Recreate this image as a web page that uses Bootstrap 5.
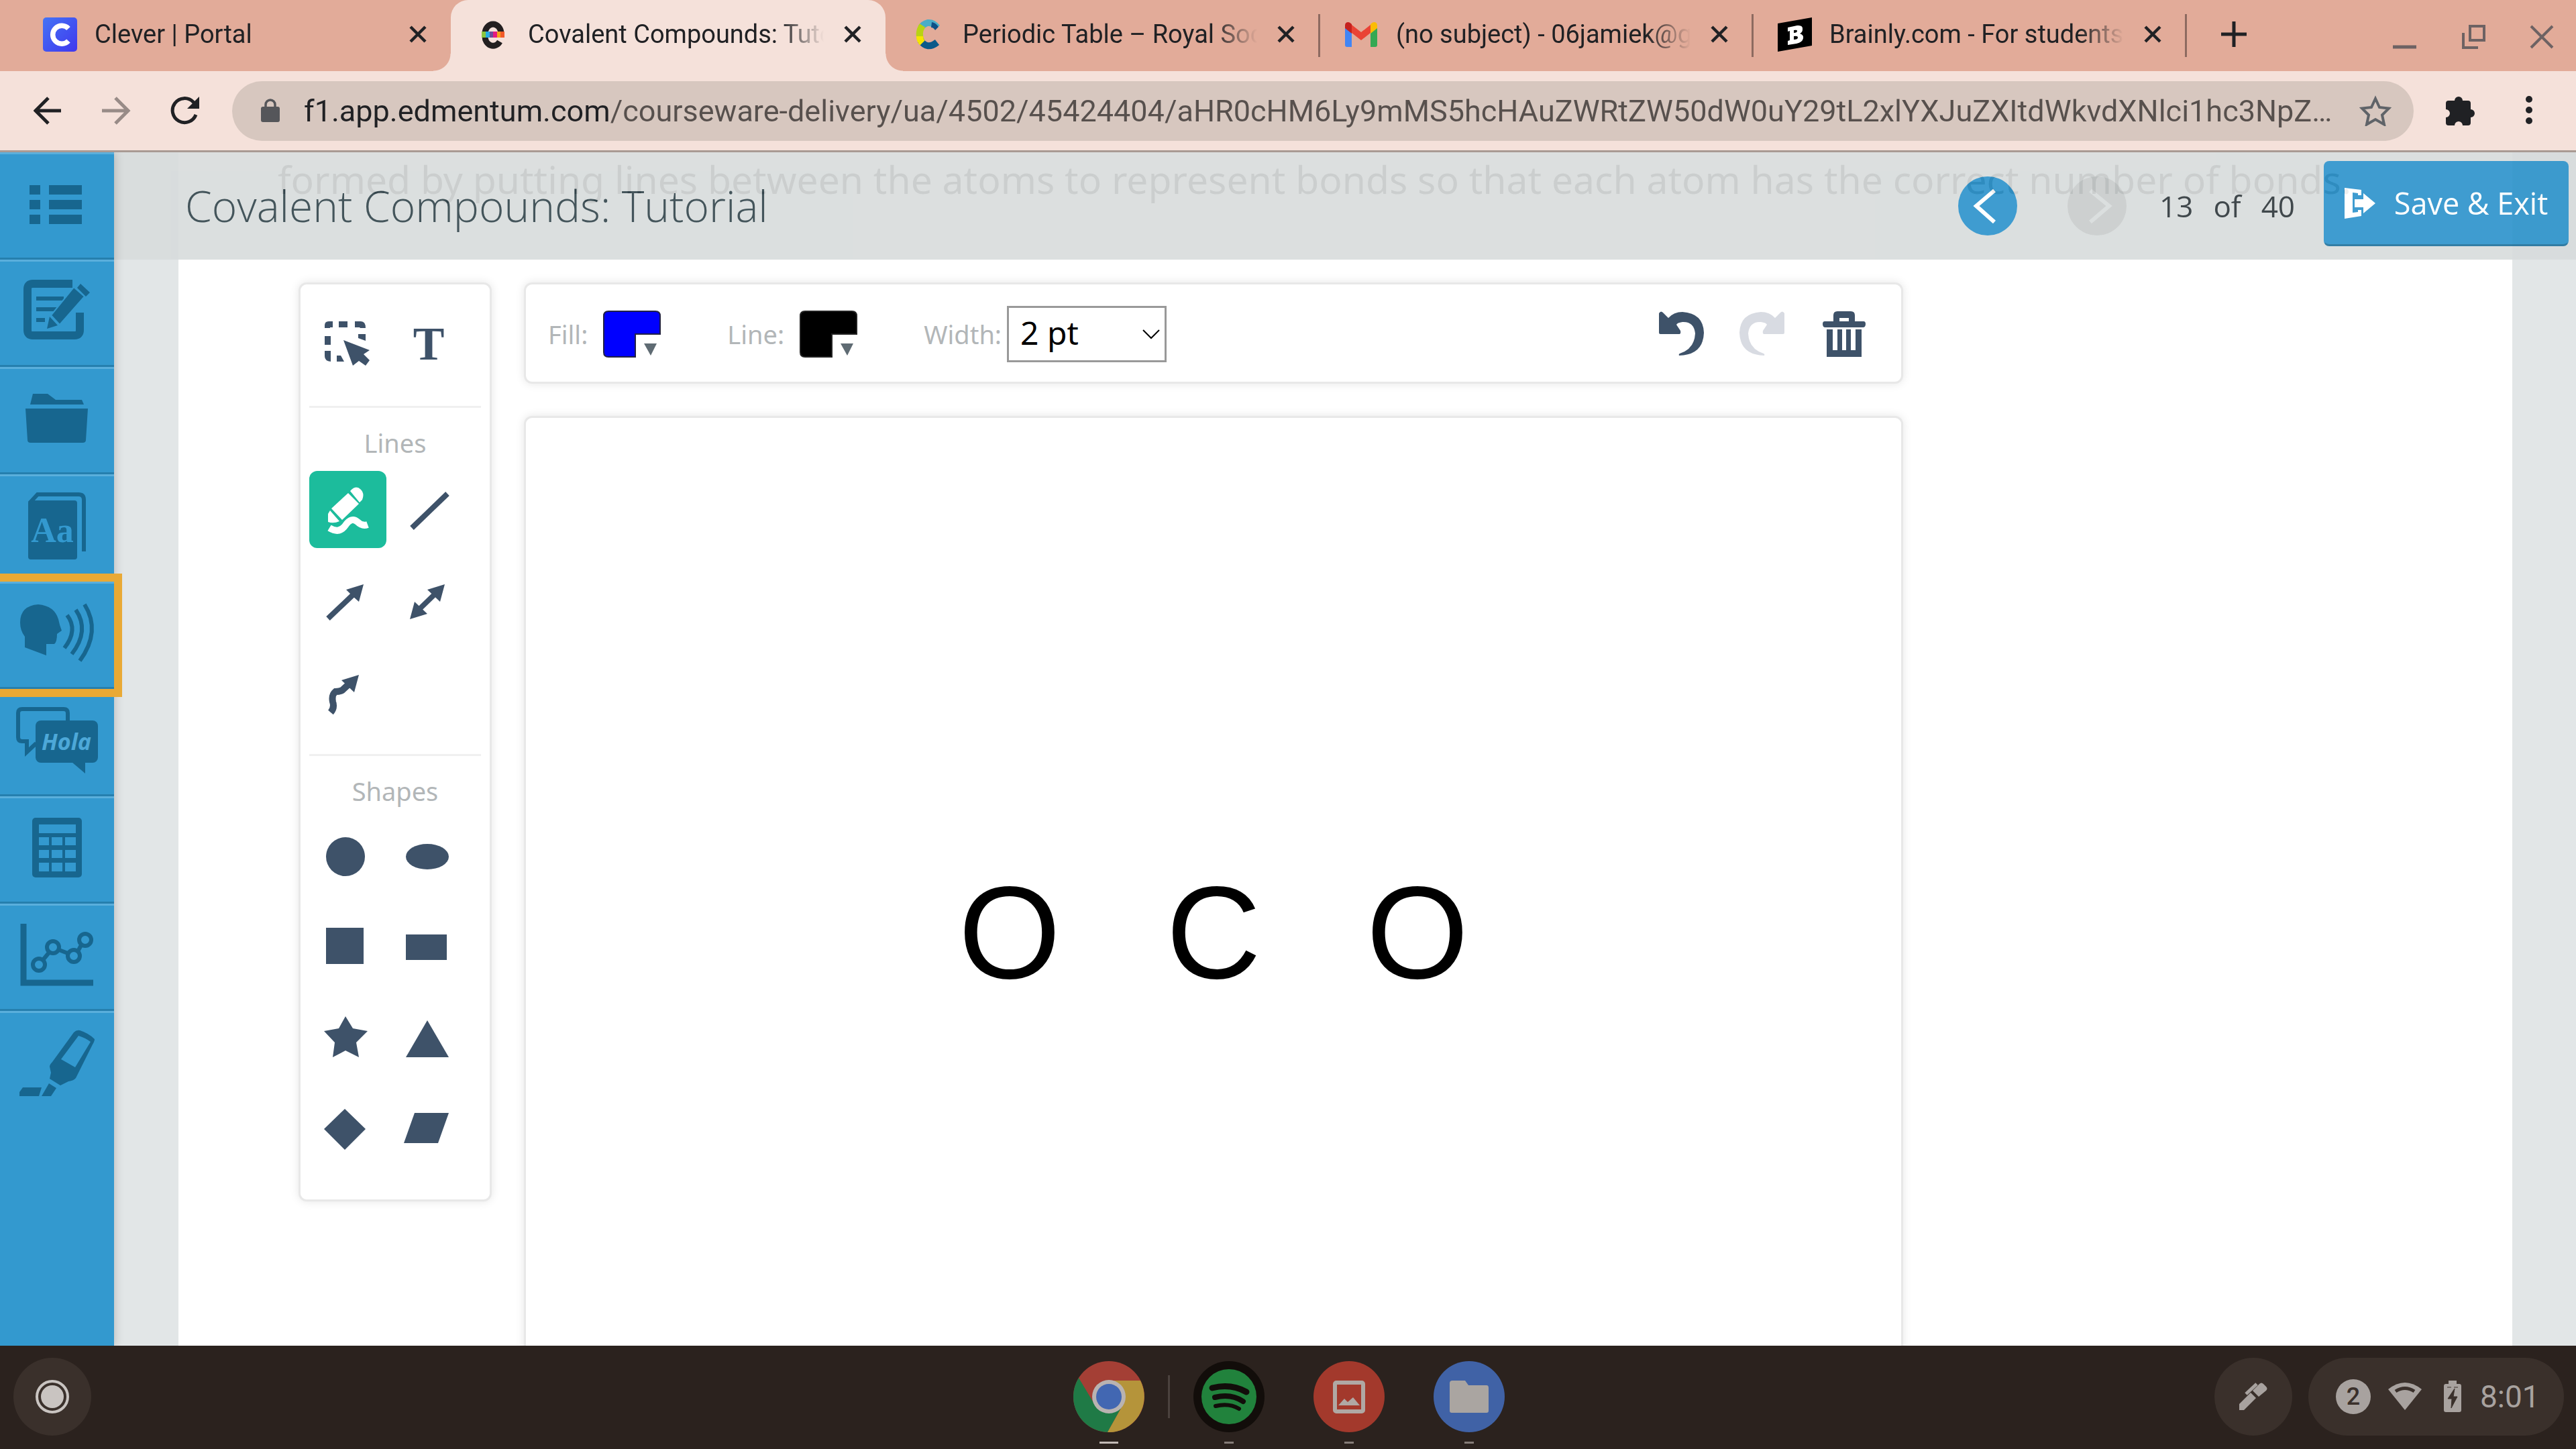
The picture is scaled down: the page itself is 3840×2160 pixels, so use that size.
<!DOCTYPE html>
<html lang="en">
<head>
<meta charset="utf-8">
<meta name="viewport" content="width=device-width, initial-scale=1">
<title>Covalent Compounds: Tutorial</title>
<link href="https://cdn.jsdelivr.net/npm/bootstrap@5.3.0/dist/css/bootstrap.min.css" rel="stylesheet">
<style>
:root{--ink:#3e5269;--side:#3399cf;--side-ink:#17668f;--peach:#f5e1da;--strip:#e2ab99;--ui:#202124}
body{height:100vh;overflow:hidden;font-family:"Open Sans",sans-serif;background:#e2e6e7}
svg{display:block;flex:none}
button{border:0;background:none;padding:0}
.chrome-ui{font-family:Roboto,sans-serif;color:var(--ui)}
.tab-strip{height:106px;background:var(--strip);padding-left:26px;padding-right:33px}
.browser-tab{position:relative;flex:0 1 646px;min-width:0;height:106px;padding:0 35px 4px 38px}
.browser-tab.current{background:var(--peach);border-radius:26px 26px 0 0;flex-basis:648px}
.browser-tab.current::before,.browser-tab.current::after{content:"";position:absolute;bottom:0;width:26px;height:26px}
.browser-tab.current::before{right:100%;background:radial-gradient(circle at 0 0,var(--strip) 25px,var(--peach) 26px)}
.browser-tab.current::after{left:100%;background:radial-gradient(circle at 100% 0,var(--strip) 25px,var(--peach) 26px)}
.browser-tab.divided::after{content:"";position:absolute;right:-2px;top:21px;width:3px;height:64px;background:#8d6a60}
.tab-title{font-size:38px;line-height:48px;color:var(--ui);margin-left:26px;margin-right:29px;overflow:hidden;white-space:nowrap;flex:1 1 0;-webkit-mask-image:linear-gradient(90deg,#000 calc(100% - 66px),transparent);mask-image:linear-gradient(90deg,#000 calc(100% - 66px),transparent)}
.address-bar{height:121px;background:var(--peach);border-bottom:3px solid #a99a94;padding-left:50px;padding-right:64px}
.url-pill{height:89px;border-radius:45px;background:#d7c7bf;padding:0 33px 0 43px;margin:0 48px 0 48px}
.url-input{border:0;outline:0;padding:0;font-size:45px;line-height:56px;height:60px;margin-left:36px;text-overflow:ellipsis;background:linear-gradient(90deg,#202124 457px,#57504d 457px);-webkit-background-clip:text;background-clip:text;-webkit-text-fill-color:transparent}
.side-nav{width:170px;background:var(--side);box-shadow:0 0 14px rgba(0,0,0,.22);z-index:3}
.side-link{display:block;height:160px;border-top:3px solid #5aafdc;border-bottom:3px solid #267fae;color:var(--side-ink)}
.side-link.last-link{border-bottom-color:transparent}
.side-link.focused{outline:12px solid #e9a935;position:relative;z-index:1}
.stage{position:relative;overflow:hidden}
.sheet{background:#fff;margin:0 95px 0 96px;height:100%}
.instruction{font-size:57px;line-height:80px;color:#555;padding-left:148px;margin:0 0 114px;white-space:nowrap;font-family:"Noto Sans",sans-serif}
.lesson-bar{position:absolute;top:0;left:0;right:0;height:160px;padding-left:106px;padding-right:11px;background:#d8dcdc;opacity:.9;color:#30434a;z-index:2}
.lesson-title{font-size:64px;font-weight:300;line-height:80px;margin:0}
.page-gap{margin-right:75px}
.page-count{font-size:44px;line-height:60px;gap:30px;margin:0 43px 0 49px;color:#2c3539}
.exit-btn{height:127px;width:365px;border-radius:8px;background:#2b92cb;border-bottom:3px solid #1e719c;color:#fff;font-size:45px;margin-top:13px;align-self:flex-start}
.exit-btn:hover{background:#2b92cb;color:#fff}
.workspace{padding-left:179px;gap:48px}
.panel{background:#fff;border:3px solid #e8e8e8;border-radius:12px;box-shadow:0 0 14px rgba(0,0,0,.1)}
.tool-panel{width:288px;padding:31px 13px 44px;flex:none}
.tool-grid{display:grid;grid-template-columns:115px 115px;gap:21px 6px}
.tool-btn{width:115px;height:115px;border-radius:12px;color:var(--ink)}
.tool-btn.active{background:#1cbc9c;color:#fff}
.rule{height:3px;background:#f0f0f0;margin:35px 0 24px}
.tool-head{font-size:38px;font-weight:400;line-height:56px;margin:0 0 14px;color:#b2b6b8;text-align:center;font-family:"Noto Sans",sans-serif}
.board{flex:0 1 2056px;min-width:0}
.options{height:151px;padding:3px 53px 0 33px;margin-bottom:48px;font-family:"Noto Sans",sans-serif}
.options label{font-size:38px;line-height:56px;color:#b2b6b8}
.swatch{margin:0 99px 0 23px}
.width-select{width:238px;height:84px;border:3px solid #999;border-radius:0;font-size:48px;line-height:64px;padding:0 40px 4px 17px;color:#000;margin-left:8px;background:#fff url("data:image/svg+xml,%3Csvg xmlns='http://www.w3.org/2000/svg' viewBox='0 0 28 16'%3E%3Cpath d='M2 2l12 12L26 2' fill='none' stroke='%23000' stroke-width='2'/%3E%3C/svg%3E") no-repeat right 6px center/28px 16px}
.drawing{height:1542px;font-family:"Liberation Sans",Arial,sans-serif;font-size:196px;line-height:196px;color:#000;gap:157px}
.shelf{height:154px;background:#2b221e;font-family:Roboto,sans-serif;color:#a8a29f;padding:0 18px 2px 20px;z-index:4}
.shelf-round{width:116px;height:116px;border-radius:50%;background:#3a302b}
.shelf-side{flex:1 1 0}
.app-row{gap:73px}
.app{position:relative;width:106px;height:106px}
.app::after{content:"";position:absolute;left:46px;top:120px;width:14px;height:3px;background:#857c78}
.app.open::after{left:39px;width:28px;background:#c2b9b5}
.shelf-rule{width:3px;height:64px;background:#4b423e;margin:0 -38px}
.tray{height:116px;width:381px;border-radius:58px;background:#3a302b;padding-left:41px}
.count{width:52px;height:52px;border-radius:50%;background:#a8a29f;color:#3a302b;font-size:36px;line-height:52px;font-weight:500;text-align:center}
.wifi{margin-left:26px}
.battery{margin:0 28px 0 33px}
.clock{font-size:46px;line-height:56px}
</style>
<script src="https://cdn.jsdelivr.net/npm/bootstrap@5.3.0/dist/js/bootstrap.bundle.min.js"></script>
</head>
<body class="d-flex flex-column">
<svg width="0" height="0" class="position-absolute" aria-hidden="true"><defs>
<symbol id="x" viewBox="0 0 28 28"><path d="M3 3l22 22M25 3L3 25" stroke="#202124" stroke-width="4.5" fill="none"/></symbol>
<linearGradient id="cg" x1="0" y1="0" x2="1" y2="1"><stop offset="0" stop-color="#4474f5"/><stop offset="1" stop-color="#4037ee"/></linearGradient>
</defs></svg>

<header class="chrome-ui flex-shrink-0">
  <div class="tab-strip d-flex">
    <div class="browser-tab d-flex align-items-center">
      <svg width="51" height="51" viewBox="0 0 51 51"><rect width="51" height="51" rx="5" fill="url(#cg)"/><path d="M38 16.500A13.500 13.500 0 1 0 38 35" fill="none" stroke="#fff" stroke-width="7.500"/></svg>
      <span class="tab-title">Clever | Portal</span>
      <button type="button" aria-label="Close tab"><svg width="28" height="28"><use href="#x"/></svg></button>
    </div>
    <div class="browser-tab current d-flex align-items-center">
      <svg width="51" height="51" viewBox="0 0 51 51"><path d="M13 24A12 14 0 0 1 37 24M13 28A12 14 0 0 0 35 36" fill="none" stroke="#231f20" stroke-width="9"/><path d="M8 21h6v9H8z" fill="#8cc63f"/><path d="M14 21h6v9h-6z" fill="#29abe2"/><path d="M20 21h5v9h-5z" fill="#6a4c9c"/><path d="M25 21h6v9h-6z" fill="#e6197f"/><path d="M31 21h5v9h-5z" fill="#f7a11a"/><path d="M36 21h6v9h-6z" fill="#f15a29"/></svg>
      <span class="tab-title">Covalent Compounds: Tuto</span>
      <button type="button" aria-label="Close tab"><svg width="28" height="28"><use href="#x"/></svg></button>
    </div>
    <div class="browser-tab divided d-flex align-items-center">
      <svg width="51" height="51" viewBox="0 0 51 51" fill="none" stroke-width="10"><path d="M39 15Q33 7 25 8Q18 10 15 15" stroke="#4badc8"/><path d="M41 14Q37 8 31 7l-1 8Q34 15 36 19z" fill="#0e4f86"/><path d="M17 12Q9 24 16 37" stroke="#b9d313"/><path d="M14 34Q24 49 39 37" stroke="#0b5a8a"/><path d="M13 28Q13 34 17 38" stroke="#f6e500"/></svg>
      <span class="tab-title">Periodic Table – Royal Soci</span>
      <button type="button" aria-label="Close tab"><svg width="28" height="28"><use href="#x"/></svg></button>
    </div>
    <div class="browser-tab divided d-flex align-items-center">
      <svg width="51" height="51" viewBox="0 0 51 51"><path d="M1 15l10 7v22H4q-3 0-3-3z" fill="#4285f4"/><path d="M49 15l-10 7v22h7q3 0 3-3z" fill="#34a853"/><path d="M11 11l14 11 14-11v12L25 34 11 23z" fill="#ea4335"/><path d="M1 12q0-5 5-5 2 0 5 3v14L1 16z" fill="#c5221f"/><path d="M49 12q0-5-5-5-2 0-5 3v14l10-8z" fill="#fbbc04"/></svg>
      <span class="tab-title">(no subject) - 06jamiek@gm</span>
      <button type="button" aria-label="Close tab"><svg width="28" height="28"><use href="#x"/></svg></button>
    </div>
    <div class="browser-tab divided d-flex align-items-center">
      <svg width="51" height="51" viewBox="0 0 51 51"><path d="M0 9L51 0v42L0 51z" fill="#000"/><path d="M15 15l14-3q9-1 8 6 0 4-4 6 6 2 5 7-1 6-10 8l-13 2v-6l3-1V20l-3 1zM24 19v4q5 0 5-3 0-2-5-1zM24 28v5q6 0 6-3 0-3-6-2z" fill="#fff" fill-rule="evenodd"/></svg>
      <span class="tab-title">Brainly.com - For students.</span>
      <button type="button" aria-label="Close tab"><svg width="28" height="28"><use href="#x"/></svg></button>
    </div>
    <div class="d-flex align-items-center flex-grow-1 justify-content-between ps-5 pb-1">
      <button type="button" class="ms-1" aria-label="New tab"><svg width="40" height="40"><path d="M20 1v38M1 20h38" stroke="#202124" stroke-width="5"/></svg></button>
      <div class="d-flex pt-2">
        <button type="button" aria-label="Minimize"><svg width="102" height="36"><path d="M0 33h35" stroke="#6d6263" stroke-width="5"/></svg></button>
        <button type="button" aria-label="Restore"><svg width="102" height="36" fill="none" stroke="#6d6263" stroke-width="4"><path d="M13 2h21v21H13zM3 12v22h22"/></svg></button>
        <button type="button" aria-label="Close window"><svg width="36" height="36"><path d="M2 2l32 32M34 2L2 34" stroke="#6d6263" stroke-width="4"/></svg></button>
      </div>
    </div>
  </div>
  <div class="address-bar d-flex align-items-center">
    <button type="button" aria-label="Back"><svg width="102" height="42" fill="none" stroke="#202124" stroke-width="5"><path d="M41 21H4M22 2L3 21l19 19"/></svg></button>
    <button type="button" aria-label="Forward"><svg width="102" height="42" fill="none" stroke="#988b87" stroke-width="5"><path d="M0 21h38M20 2l19 19-19 19"/></svg></button>
    <button type="button" aria-label="Reload"><svg width="44" height="42" viewBox="0 0 44 42"><path d="M38 27A18 18 0 1 1 34 8l4 4" fill="none" stroke="#202124" stroke-width="5"/><path d="M43 0v18H25z" fill="#202124"/></svg></button>
    <div class="url-pill d-flex align-items-center flex-grow-1">
      <svg width="28" height="36" viewBox="0 0 28 36"><path d="M7 14V9a7 7 0 0 1 14 0v5" fill="none" stroke="#55565a" stroke-width="3.500"/><rect y="12" width="28" height="23" rx="3" fill="#55565a"/></svg>
      <input class="url-input flex-grow-1" type="text" aria-label="Address" value="f1.app.edmentum.com/courseware-delivery/ua/4502/45424404/aHR0cHM6Ly9mMS5hcHAuZWRtZW50dW0uY29tL2xlYXJuZXItdWkvdXNlci1hc3NpZ…">
      <button type="button" class="ms-4" aria-label="Bookmark"><svg width="48" height="46" viewBox="0 0 48 46"><path d="M24 5l6 13 14 1.500-10 10 3 14L24 36l-13 7.500 3-14-10-10L18 18z" fill="none" stroke="#5f6368" stroke-width="4"/></svg></button>
    </div>
    <button type="button" class="me-5" aria-label="Extensions"><svg width="46" height="46" viewBox="0 0 46 46"><path d="M13 8a6 6 0 0 1 12 0h8a4 4 0 0 1 4 4v9a6 6 0 0 1 0 12v8a4 4 0 0 1-4 4h-8a6 6 0 0 0-12 0H4a4 4 0 0 1-4-4v-8a6 6 0 0 0 0-12v-9a4 4 0 0 1 4-4z" fill="#202124"/></svg></button>
    <button type="button" class="ms-4" aria-label="Menu"><svg width="12" height="46" fill="#202124"><circle cx="6" cy="6" r="5"/><circle cx="6" cy="22" r="5"/><circle cx="6" cy="38" r="5"/></svg></button>
  </div>
</header>

<div class="d-flex flex-grow-1 overflow-hidden">
  <nav class="side-nav flex-shrink-0" aria-label="Tools">
    <a class="side-link" href="#" aria-label="Contents"><svg width="170" height="154" viewBox="0 230 170 154" fill="currentColor"><path d="M44 276h16v14H44zM73 276h49v14H73zM44 298h16v14H44zM73 298h49v14H73zM44 320h16v14H44zM73 320h49v14H73z"/></svg></a>
    <a class="side-link" href="#" aria-label="Notes"><svg width="170" height="154" viewBox="0 390 170 154" fill="currentColor"><path d="M108 423H49q-8 0-8 8v61q0 8 8 8h62q8 0 8-8v-26" fill="none" stroke="currentColor" stroke-width="12"/><path d="M54 445h41M54 461h30M54 477h13" stroke="currentColor" stroke-width="6"/><path d="M110 428l16 14-37 42-13-14z" stroke="#3399cf" stroke-width="2"/><path d="M74 472l12 13-16 5zM120 423l14 13-6 6-13-13z"/></svg></a>
    <a class="side-link" href="#" aria-label="Folder"><svg width="170" height="154" viewBox="0 550 170 154" fill="currentColor"><path d="M49 587h22l12 9h39l3 7H45zM38 609h93l-3 47q0 4-5 4H46q-5 0-5-4z"/></svg></a>
    <a class="side-link" href="#" aria-label="Dictionary"><svg width="170" height="154" viewBox="0 710 170 154" fill="currentColor"><rect x="42" y="746" width="73" height="88" rx="4"/><path d="M44 750l12-13h61q8 0 8 8v77" fill="none" stroke="currentColor" stroke-width="6"/><text x="78" y="808" text-anchor="middle" font-family="Liberation Serif" font-weight="700" font-size="52" fill="#3399cf">Aa</text></svg></a>
    <a class="side-link focused" href="#" aria-label="Read aloud"><svg width="170" height="154" viewBox="0 870 170 154" fill="currentColor"><path d="M57 901q-27 2-27 27 0 12 7 21v16l32 12v-17h12q4-3 4-15l7-5q-3-7-5-17-6-20-30-22z"/><path d="M100 917q17 22-4 49M113 909q21 31-6 66M126 901q25 40-7 84" fill="none" stroke="currentColor" stroke-width="6"/></svg></a>
    <a class="side-link" href="#" aria-label="Translate"><svg width="170" height="154" viewBox="0 1030 170 154" fill="currentColor"><path d="M101 1074v-11q0-6-6-6H33q-6 0-6 6v36q0 6 6 6h7v16l14-13" fill="none" stroke="currentColor" stroke-width="6"/><rect x="53" y="1074" width="93" height="63" rx="8"/><path d="M107 1136h20v17z"/><text x="99" y="1118" text-anchor="middle" font-family="Open Sans" font-weight="700" font-style="italic" font-size="34" fill="#4da8d8">Hola</text></svg></a>
    <a class="side-link" href="#" aria-label="Calculator"><svg width="170" height="154" viewBox="0 1190 170 154" fill="#3399cf"><rect x="48" y="1219" width="74" height="89" rx="5" fill="currentColor"/><path d="M58 1229h55v13H58z"/><path d="M58 1248h15v12H58zM77 1248h16v12H77zM97 1248h16v12H97zM58 1267h15v12H58zM77 1267h16v12H77zM97 1267h16v12H97zM58 1286h15v13H58zM77 1286h16v13H77zM97 1286h16v13H97z"/></svg></a>
    <a class="side-link" href="#" aria-label="Graph"><svg width="170" height="154" viewBox="0 1350 170 154" fill="none" stroke="currentColor"><path d="M35 1377v88h104" stroke-width="9"/><path d="M64 1431l9-11M88 1416l13 5M116 1418l5-9" stroke-width="6"/><g stroke-width="6"><circle cx="58" cy="1438" r="9"/><circle cx="79" cy="1412" r="9"/><circle cx="110" cy="1425" r="9"/><circle cx="127" cy="1401" r="9"/></g></svg></a>
    <a class="side-link last-link" href="#" aria-label="Highlighter"><svg width="170" height="154" viewBox="0 1510 170 154" fill="currentColor"><path d="M110 1539q4-4 9-3 13 4 22 13 0 3-3 8l-25 50q-3 4-11 5l-12 6-16-10 2-9-2-9q0-3 4-7zM117 1544l-26 35 21 12 23-38q-8-6-18-9z" fill-rule="evenodd"/><path d="M73 1615l11 7-8 12H62zM34 1621h28l-4 13H29v-6z"/></svg></a>
  </nav>

  <main class="stage flex-grow-1">
    <div class="lesson-bar d-flex align-items-center">
      <h1 class="lesson-title me-auto">Covalent Compounds: Tutorial</h1>
      <button type="button" aria-label="Previous page" class="page-gap"><svg width="88" height="88"><circle cx="44" cy="44" r="44" fill="#2b92cb"/><path d="M54 21L27 44l27 24" fill="none" stroke="#fff" stroke-width="6"/></svg></button>
      <button type="button" aria-label="Next page" disabled><svg width="88" height="88"><circle cx="44" cy="44" r="44" fill="#c8cccc"/><path d="M34 21l28 23-28 24" fill="none" stroke="#d8dcdc" stroke-width="6"/></svg></button>
      <div class="page-count d-flex"><span>13</span><span>of</span><span>40</span></div>
      <button type="button" class="btn exit-btn d-flex align-items-center p-0 justify-content-center"><svg width="46" height="46" viewBox="0 0 46 46" class="me-4" fill="#fff"><path d="M0 0l25 3v8h-5V8L12 7v30l8-1v-3h5v9L0 46z"/><path d="M15 17h13V8l18 15-18 15v-9H15z"/></svg><span class="ms-1">Save &amp; Exit</span></button>
    </div>
    <div class="sheet">
      <p class="instruction">formed by putting lines between the atoms to represent bonds so that each atom has the correct number of bonds.</p>
      <div class="workspace d-flex align-items-start">
        <section class="panel tool-panel">
          <div class="tool-grid">
            <button type="button" class="tool-btn" aria-label="Select"><svg width="115" height="115" viewBox="461 455 115 115" fill="currentColor"><path d="M484 489v-4q0-6 6-6h6v9h-4v1zM505 479h13v9h-13zM529 479h9q7 0 7 10h-8l-1-1h-7zM484 501h9v13h-9zM484 523h9v16q-9-1-9-8zM502 530h6l5 9h-11zM534 498h11v10l-11-4z"/><path d="M512 507l39 15-9 6 9 9-6 8-10-7-9 7z"/></svg></button>
            <button type="button" class="tool-btn" aria-label="Text"><svg width="115" height="115" viewBox="582 455 115 115" fill="currentColor"><text x="639" y="536" text-anchor="middle" font-family="Liberation Serif" font-weight="700" font-size="70">T</text></svg></button>
          </div>
          <div class="rule"></div>
          <h2 class="tool-head">Lines</h2>
          <div class="tool-grid">
            <button type="button" class="tool-btn active" aria-label="Freehand"><svg width="115" height="115" viewBox="461 702 115 115" fill="currentColor"><path d="M519 735l16 16-25 24-16-17zM522 732q8-9 15-3t3 16l-4 4zM492 761l14 16q-9 4-17 1v-12z"/><path d="M491 787q15 9 24-4t18-5q7 7 15 4" fill="none" stroke="currentColor" stroke-width="10"/></svg></button>
            <button type="button" class="tool-btn" aria-label="Line"><svg width="115" height="115" viewBox="582 702 115 115"><path d="M614 787l53-51" stroke="currentColor" stroke-width="8"/></svg></button>
            <button type="button" class="tool-btn" aria-label="Arrow"><svg width="115" height="115" viewBox="461 838 115 115" fill="currentColor"><path d="M489 922l40-38" stroke="currentColor" stroke-width="8"/><path d="M542 871l-7 26-9-8-10-10z"/></svg></button>
            <button type="button" class="tool-btn" aria-label="Double arrow"><svg width="115" height="115" viewBox="582 838 115 115" fill="currentColor"><path d="M620 913l32-31" stroke="currentColor" stroke-width="8"/><path d="M663 871l-7 26-19-18zM611 923l7-26 19 18z"/></svg></button>
            <button type="button" class="tool-btn" aria-label="Curved arrow"><svg width="115" height="115" viewBox="461 974 115 115" fill="currentColor"><path d="M493 1062q6-7 3-16-2-10 4-15 6 0 10-2l12-11" fill="none" stroke="currentColor" stroke-width="10"/><path d="M535 1006l-7 26-19-18z"/></svg></button>
          </div>
          <div class="rule"></div>
          <h2 class="tool-head">Shapes</h2>
          <div class="tool-grid">
            <button type="button" class="tool-btn" aria-label="Circle"><svg width="115" height="115" viewBox="461 1221 115 115" fill="currentColor"><circle cx="515" cy="1277" r="29"/></svg></button>
            <button type="button" class="tool-btn" aria-label="Ellipse"><svg width="115" height="115" viewBox="582 1221 115 115" fill="currentColor"><ellipse cx="637" cy="1277" rx="32" ry="19"/></svg></button>
            <button type="button" class="tool-btn" aria-label="Square"><svg width="115" height="115" viewBox="461 1357 115 115" fill="currentColor"><path d="M486 1383h56v54h-56z"/></svg></button>
            <button type="button" class="tool-btn" aria-label="Rectangle"><svg width="115" height="115" viewBox="582 1357 115 115" fill="currentColor"><path d="M605 1393h61v38h-61z"/></svg></button>
            <button type="button" class="tool-btn" aria-label="Star"><svg width="115" height="115" viewBox="461 1493 115 115" fill="currentColor"><path d="M515 1515l11 18 22 4-17 17 4 22-20-10-19 10 3-22-16-17 22-4z"/></svg></button>
            <button type="button" class="tool-btn" aria-label="Triangle"><svg width="115" height="115" viewBox="582 1493 115 115" fill="currentColor"><path d="M637 1521l32 55h-64z"/></svg></button>
            <button type="button" class="tool-btn" aria-label="Diamond"><svg width="115" height="115" viewBox="461 1629 115 115" fill="currentColor"><path d="M514 1653l31 30-31 31-31-31z"/></svg></button>
            <button type="button" class="tool-btn" aria-label="Parallelogram"><svg width="115" height="115" viewBox="582 1629 115 115" fill="currentColor"><path d="M618 1659h51l-16 45h-51z"/></svg></button>
          </div>
        </section>
        <div class="board">
          <div class="panel options d-flex align-items-center">
            <label for="fill">Fill:</label>
            <button type="button" id="fill" class="swatch"><svg width="86" height="70"><path d="M8 1h70q7 0 7 7v27H48v34H8q-7 0-7-7V8q0-7 7-7z" fill="#00f" stroke="#222244" stroke-width="2"/><path d="M61 49h19l-9 18z" fill="#5f6b73"/></svg></button>
            <label for="line">Line:</label>
            <button type="button" id="line" class="swatch"><svg width="86" height="70"><path d="M8 1h70q7 0 7 7v27H48v34H8q-7 0-7-7V8q0-7 7-7z" fill="#000" stroke="#222" stroke-width="2"/><path d="M61 49h19l-9 18z" fill="#5f6b73"/></svg></button>
            <label for="width">Width:</label>
            <select id="width" class="form-select width-select"><option>2 pt</option></select>
            <div class="d-flex ms-auto gap-5">
              <button type="button" aria-label="Undo"><svg width="72" height="70" viewBox="0 0 72 70" fill="#3e5269"><path d="M0 4q3-5 7 0l7 7Q22 2 35 2q31 2 32 31-1 33-37 34-1-2 1-3 22-7 23-30-2-18-19-17-8 1-9 4l6 9q1 5-2 5H2q-2 0-2-2z"/></svg></button>
              <button type="button" aria-label="Redo" disabled><svg width="76" height="70" viewBox="-67 0 76 70" fill="#d8dbe2"><path transform="scale(-1 1)" d="M0 4q3-5 7 0l7 7Q22 2 35 2q31 2 32 31-1 33-37 34-1-2 1-3 22-7 23-30-2-18-19-17-8 1-9 4l6 9q1 5-2 5H2q-2 0-2-2z"/></svg></button>
              <button type="button" aria-label="Delete"><svg width="64" height="70" viewBox="0 0 64 70" fill="#3e5269"><path d="M16 16V7q0-6 6-6h20q6 0 6 6v9h13q3 0 3 4 0 5-4 5H4q-4 0-4-5 0-4 3-4zM25 16h14v-5H25zM6 28h52v41H6zM15 28v31h7V28zM29 28v31h6V28zM42 28v31h7V28z" fill-rule="evenodd"/></svg></button>
            </div>
          </div>
          <div class="panel drawing d-flex align-items-center justify-content-center"><span>O</span><span>C</span><span>O</span></div>
        </div>
      </div>
    </div>
  </main>
</div>

<footer class="shelf d-flex align-items-center flex-shrink-0">
  <div class="shelf-side"><button type="button" class="shelf-round d-flex align-items-center justify-content-center" aria-label="Launcher"><svg width="52" height="52"><circle cx="26" cy="26" r="23" fill="none" stroke="#c9c4c1" stroke-width="4"/><circle cx="26" cy="26" r="17" fill="#c9c4c1"/></svg></button></div>
  <div class="app-row d-flex align-items-center">
    <button type="button" class="app open" aria-label="Chrome"><svg width="106" height="106" viewBox="-53 -53 106 106"><circle r="53" fill="#a43f35"/><path d="M-45-28L-21 12H21L-2 53A53 53 0 0 1-45-28z" fill="#1f7a46"/><path d="M0-24H47A53 53 0 0 1-2 53L21 12z" fill="#b5943a"/><circle r="25" fill="#b9b3b1"/><circle r="19" fill="#4267b2"/></svg></button>
    <div class="shelf-rule"></div>
    <button type="button" class="app" aria-label="Spotify"><svg width="106" height="106" viewBox="0 0 106 106"><circle cx="53" cy="53" r="53" fill="#120d0a"/><circle cx="53" cy="53" r="41" fill="#21823c"/><g fill="none" stroke="#120d0a" stroke-linecap="round"><path d="M28 40q28-7 51 6" stroke-width="9"/><path d="M32 54q24-6 42 6" stroke-width="8"/><path d="M33 67q20-5 35 4" stroke-width="6"/></g></svg></button>
    <button type="button" class="app" aria-label="Gallery"><svg width="106" height="106" viewBox="0 0 106 106"><circle cx="53" cy="53" r="53" fill="#a3392c"/><rect x="32" y="32" width="42" height="43" rx="2" fill="none" stroke="#b0a8a4" stroke-width="6"/><path d="M37 66l9-10 5 5 8-7 10 12z" fill="#b0a8a4"/></svg></button>
    <button type="button" class="app" aria-label="Files"><svg width="106" height="106" viewBox="0 0 106 106"><circle cx="53" cy="53" r="53" fill="#4062a6"/><path d="M28 29h19l5 7h27q3 0 3 4v34q0 3-3 3H27q-3 0-3-3V33q0-4 4-4z" fill="#aaa5a1"/></svg></button>
  </div>
  <div class="shelf-side d-flex justify-content-end gap-4">
    <button type="button" class="shelf-round d-flex align-items-center justify-content-center" aria-label="Stylus"><svg width="42" height="42" viewBox="0 0 42 42" fill="#a8a29f"><path d="M0 32l17-17 8 8L7 41H0zM20 12l10-10q3-3 6 0l4 4q3 3 0 6L29 21z"/><path d="M26 2L10 17" stroke="#a8a29f" stroke-width="5"/></svg></button>
    <div class="tray d-flex align-items-center">
      <span class="count">2</span>
      <svg class="wifi" width="50" height="42" viewBox="0 0 50 42"><path d="M0 10q25-20 50 0L25 41z" fill="#a8a29f"/><path d="M11 13q14-9 28 0" fill="none" stroke="#3a302b" stroke-width="5"/></svg>
      <svg class="battery" width="26" height="48" viewBox="0 0 26 48"><path d="M7 0h12v5h4q3 0 3 3v36q0 3-3 3H3q-3 0-3-3V8q0-3 3-3h4z" fill="#a8a29f"/><path d="M16 12L6 27h6l-1 14 9-17h-6zM5 10h6M15 10h6" fill="#3a302b" stroke="#3a302b" stroke-width="1"/></svg>
      <span class="clock">8:01</span>
    </div>
  </div>
</footer>
</body>
</html>
